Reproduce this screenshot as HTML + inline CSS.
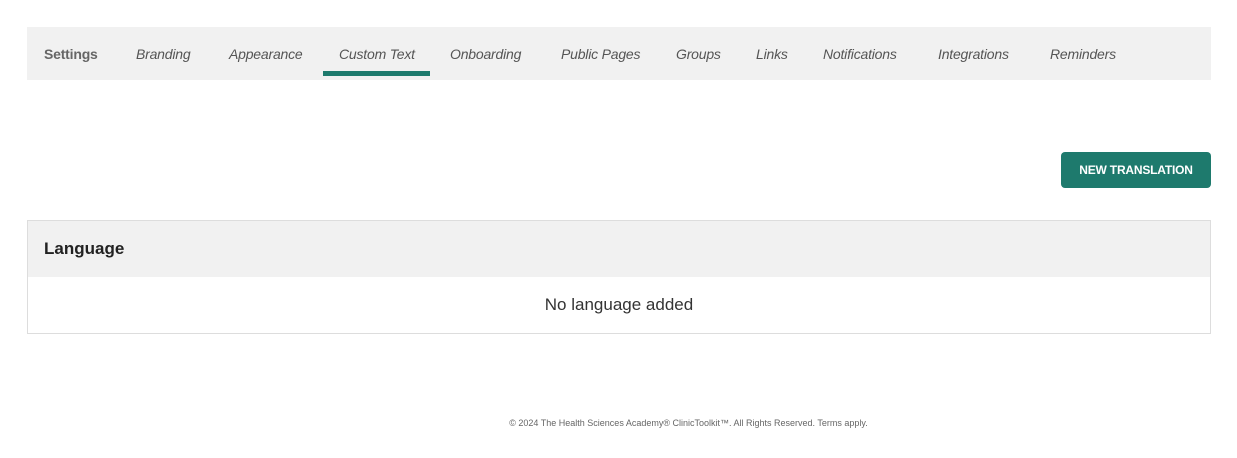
<!DOCTYPE html>
<html><head><style>
body{margin:0;width:1237px;height:458px;background:#fff;font-family:"Liberation Sans",sans-serif;position:relative;overflow:hidden}
.nav{position:absolute;left:27px;top:27px;width:1184px;height:53px;background:#f1f1f1}
.t{position:absolute;top:19px;font-size:14px;font-style:italic;color:#555;white-space:nowrap;letter-spacing:-0.2px}
.ul{position:absolute;left:296px;top:44px;width:107px;height:5px;background:#1e7a6d}
.btn{position:absolute;left:1061px;top:152px;width:150px;height:36px;background:#1e7a6d;border-radius:4px;color:#fff;font-size:12px;font-weight:bold;text-align:center;line-height:36px;letter-spacing:-0.2px}
.tbl{position:absolute;left:27px;top:220px;width:1182px;height:112px;border:1px solid #ddd}
.hd{height:56px;background:#f1f1f1;font-weight:bold;font-size:17px;color:#222;line-height:56px;padding-left:16px}
.em{text-align:center;font-size:17px;color:#333;line-height:56px}
.ft{position:absolute;top:418px;left:0;width:1237px;text-align:center;font-size:9px;color:#666;padding-left:141px;box-sizing:border-box}
</style></head><body>
<div class="nav">
<span class="t" style="left:17px;font-style:normal;font-weight:bold;color:#666">Settings</span>
<span class="t" style="left:109px">Branding</span>
<span class="t" style="left:202px">Appearance</span>
<span class="t" style="left:312px">Custom Text</span>
<span class="t" style="left:423px">Onboarding</span>
<span class="t" style="left:534px">Public Pages</span>
<span class="t" style="left:649px">Groups</span>
<span class="t" style="left:729px">Links</span>
<span class="t" style="left:796px">Notifications</span>
<span class="t" style="left:911px">Integrations</span>
<span class="t" style="left:1023px">Reminders</span>
<div class="ul"></div>
</div>
<div class="btn">NEW TRANSLATION</div>
<div class="tbl"><div class="hd">Language</div><div class="em">No language added</div></div>
<div class="ft" style="padding-left:0;left:70px">© 2024 The Health Sciences Academy® ClinicToolkit™. All Rights Reserved. Terms apply.</div>
</body></html>
